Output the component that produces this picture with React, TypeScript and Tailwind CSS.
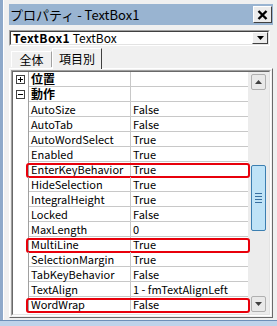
import React from "react";

const props: { name: string; value: string; hl?: boolean }[] = [
  { name: "AutoSize", value: "False" },
  { name: "AutoTab", value: "False" },
  { name: "AutoWordSelect", value: "True" },
  { name: "Enabled", value: "True" },
  { name: "EnterKeyBehavior", value: "True", hl: true },
  { name: "HideSelection", value: "True" },
  { name: "IntegralHeight", value: "True" },
  { name: "Locked", value: "False" },
  { name: "MaxLength", value: "0" },
  { name: "MultiLine", value: "True", hl: true },
  { name: "SelectionMargin", value: "True" },
  { name: "TabKeyBehavior", value: "False" },
  { name: "TextAlign", value: "1 - fmTextAlignLeft" },
  { name: "WordWrap", value: "False", hl: true },
];

const font = { fontFamily: '"Noto Sans CJK JP", "Liberation Sans", sans-serif' };

function Category({ label, open }: { label: string; open: boolean }) {
  return (
    <div className="flex h-[15px]">
      <div className="w-[16px] flex items-center justify-center border-r border-[#a0a0a0]">
        <div className="w-[9px] h-[9px] border border-[#404040] bg-white relative">
          <div className="absolute left-[1px] top-[3px] w-[5px] h-px bg-black" />
          {!open && <div className="absolute left-[3px] top-[1px] w-px h-[5px] bg-black" />}
        </div>
      </div>
      <div className="w-[102px] border-r border-b border-[#c8c8c8] pl-[2px] font-bold leading-[14px] text-[12px] text-black">
        {label}
      </div>
      <div className="flex-1 border-b border-[#c8c8c8]" />
    </div>
  );
}

function Row({ name, value, hl }: { name: string; value: string; hl?: boolean }) {
  return (
    <div className="flex h-[15px] relative">
      <div className="w-[16px] border-r border-[#a0a0a0]" />
      <div className="w-[102px] h-[15px] border-r border-b border-[#c8c8c8] pl-[2px] leading-[15px] text-[11px] text-black whitespace-nowrap">
        {name}
      </div>
      <div className="flex-1 h-[15px] border-b border-[#c8c8c8] pl-[2px] leading-[15px] text-[11px] text-black whitespace-nowrap">
        {value}
      </div>
      {hl && (
        <div className="absolute left-[13px] right-[-2px] top-[1px] bottom-[-1px] border-2 border-[#e8000b] rounded-[3px]" />
      )}
    </div>
  );
}

export default function App() {
  return (
    <div className="w-[277px] h-[326px] bg-[#f0f0f0] flex flex-col overflow-hidden" style={font}>
      <div className="flex flex-1 min-h-0">
        <div className="w-[3px] bg-[#8ea9ca]" />
        <div className="w-px bg-white" />
        <div className="flex-1 flex flex-col pt-[4px] pl-[5px]">
          {/* title bar */}
          <div className="w-[264px] h-[21px] bg-[#99b4d1] flex items-center justify-between pl-[1px] pr-[1px]">
            <span className="text-[13px] leading-[15px] text-black">プロパティ - TextBox1</span>
            <div className="w-[19px] h-[17px] bg-[#ececec] border border-t-white border-l-white border-r-[#404040] border-b-[#404040] flex items-center justify-center">
              <svg width="11" height="10" viewBox="0 0 11 10">
                <path d="M1.5 1 L9.5 9 M9.5 1 L1.5 9" stroke="#000" strokeWidth="2.4" />
              </svg>
            </div>
          </div>
          {/* dropdown */}
          <div className="mt-[5px] w-[261px] h-[16px] bg-white border border-t-[#a0a0a0] border-l-[#a0a0a0] border-r-white border-b-white">
            <div className="h-full border border-t-[#404040] border-l-[#404040] border-r-[#e3e3e3] border-b-[#e3e3e3] flex items-center">
              <span className="pl-[2px] text-[12px] leading-[14px] text-black whitespace-nowrap">
                <b className="tracking-[0.4px]">TextBox1</b> TextBox
              </span>
              <div className="ml-auto w-[16px] h-[12px] bg-[#ececec] border border-t-white border-l-white border-r-[#404040] border-b-[#404040] flex items-center justify-center">
                <svg width="7" height="4" viewBox="0 0 7 4">
                  <path d="M0 0 H7 L3.5 4 Z" fill="#000" />
                </svg>
              </div>
            </div>
          </div>
          {/* tabs */}
          <div className="mt-[1px] flex items-end h-[21px] pl-[2px] relative z-10">
            <div className="w-[41px] h-[16px] border-l border-t border-white border-r border-r-[#a0a0a0] flex items-center justify-center text-[12px] leading-[14px] text-black mb-px">
              全体
            </div>
            <div className="w-[50px] h-[21px] bg-[#f0f0f0] border-l border-t border-white border-r border-r-[#404040] flex items-center justify-center text-[12px] leading-[14px] text-black -mb-px">
              項目別
            </div>
          </div>
          {/* panel */}
          <div className="w-[264px] h-[250px] border border-t-white border-l-white border-r-[#696969] border-b-[#696969] p-[1px]">
            <div className="h-full border border-t-[#a0a0a0] border-l-[#a0a0a0] border-r-white border-b-white">
              <div className="h-full border border-t-[#696969] border-l-[#696969] border-r-[#e3e3e3] border-b-[#e3e3e3] flex bg-white">
                <div className="w-[235px] flex flex-col">
                  <Category label="位置" open={false} />
                  <Category label="動作" open={true} />
                  {props.map((p) => (
                    <Row key={p.name} {...p} />
                  ))}
                </div>
                {/* scrollbar */}
                <div className="flex-1 bg-[#ececec] flex flex-col items-center pt-[2px] pb-[2px]">
                  <div className="w-[15px] h-[16px] rounded-[2px] border border-[#b0b0b0] bg-[#e9e9e9] flex items-center justify-center">
                    <svg width="7" height="4" viewBox="0 0 7 4">
                      <path d="M3.5 0 L7 4 H0 Z" fill="#404040" />
                    </svg>
                  </div>
                  <div className="h-[75px]" />
                  <div className="w-[15px] h-[66px] rounded-[2px] border border-[#3c7fb1] bg-[#bfe3f7] flex flex-col items-center justify-center gap-[2px]">
                    <div className="w-[7px] h-px bg-[#386fa0]" />
                    <div className="w-[7px] h-px bg-[#386fa0]" />
                    <div className="w-[7px] h-px bg-[#386fa0]" />
                    <div className="w-[7px] h-px bg-[#386fa0]" />
                  </div>
                  <div className="flex-1" />
                  <div className="w-[15px] h-[16px] rounded-[2px] border border-[#b0b0b0] bg-[#e9e9e9] flex items-center justify-center">
                    <svg width="7" height="4" viewBox="0 0 7 4">
                      <path d="M0 0 H7 L3.5 4 Z" fill="#404040" />
                    </svg>
                  </div>
                </div>
              </div>
            </div>
          </div>
        </div>
      </div>
      <div className="h-px bg-[#6d8fb8]" />
      <div className="h-[5px] bg-[#bed3ea]" />
    </div>
  );
}
